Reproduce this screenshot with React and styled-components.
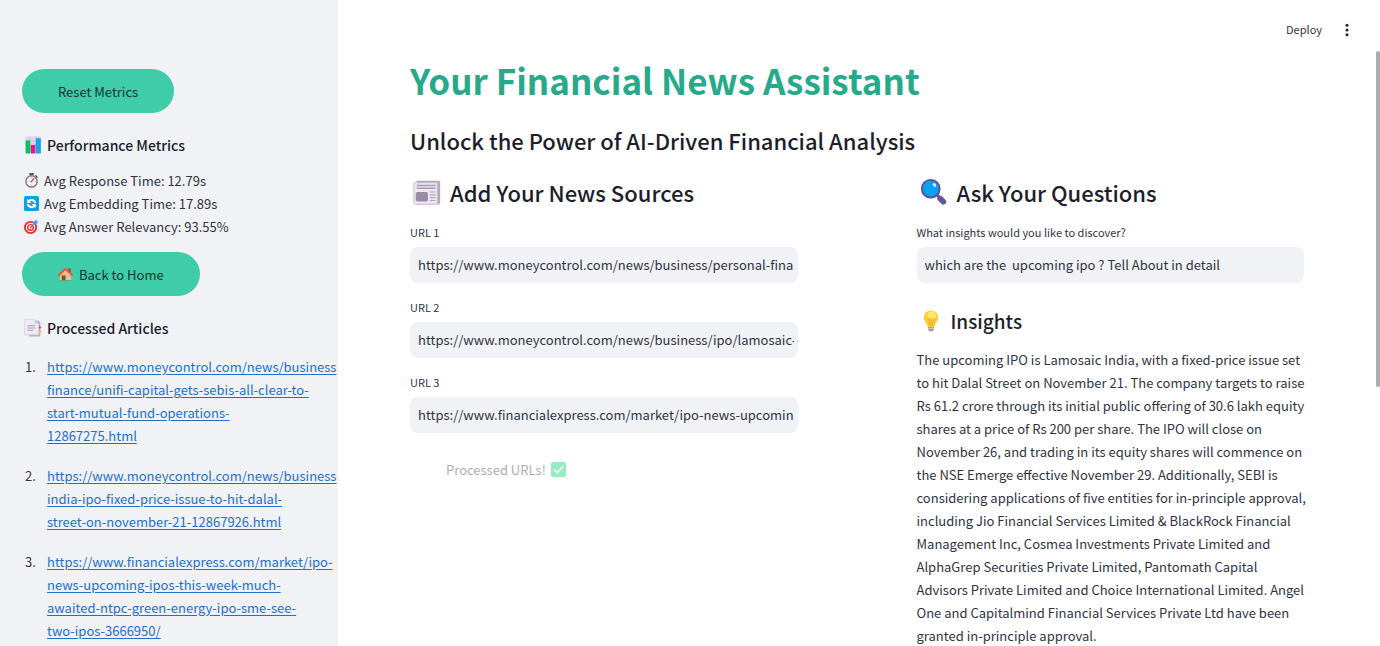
import React from "react";
import styled, { createGlobalStyle } from "styled-components";

const GlobalStyle = createGlobalStyle`
  *, *::before, *::after { box-sizing: border-box; }
  body {
    margin: 0;
    background: #ffffff;
    color: #31333f;
    font-family: "Noto Sans CJK SC", "Noto Sans", sans-serif;
    font-size: 13px;
    line-height: 23px;
  }
  button, input { font: inherit; color: inherit; }
`;

const Page = styled.div`
  position: relative;
  display: flex;
  height: 100vh;
  overflow: hidden;
`;

const Sidebar = styled.aside`
  flex: 0 0 338px;
  background: #f0f2f6;
  padding: 69px 0 0 22px;
`;

const PillButton = styled.button`
  display: flex;
  align-items: center;
  gap: 6px;
  height: 44px;
  padding: 0 36px;
  border: 0;
  border-radius: 22px;
  background: #3fcca9;
  color: #18332f;
  cursor: pointer;
`;

const SidebarHeading = styled.h2`
  display: flex;
  align-items: center;
  gap: 5px;
  margin: 20px 0 12px;
  padding-left: 2px;
  font-size: 14px;
  line-height: 24px;
  font-weight: 500;
  color: #1c1e2b;
`;

const MetricList = styled.ul`
  list-style: none;
  margin: 0 0 14px;
  padding: 0 0 0 2px;
`;

const Metric = styled.li`
  display: flex;
  align-items: center;
  gap: 5px;
`;

const ArticleList = styled.ol`
  list-style: none;
  counter-reset: article;
  display: flex;
  flex-direction: column;
  gap: 17px;
  margin: 15px 0 0;
  padding: 0;
`;

const Article = styled.li`
  counter-increment: article;
  display: grid;
  grid-template-columns: 22px 1fr;
  padding-left: 3px;

  &::before { content: counter(article) "."; }
`;

const ArticleLink = styled.a`
  white-space: pre;
  color: #1f6fcb;
  text-decoration: underline;
  text-underline-offset: 2px;
`;

const Main = styled.main`
  flex: 1;
  min-width: 0;
`;

const Toolbar = styled.header`
  display: flex;
  justify-content: flex-end;
  align-items: center;
  gap: 18px;
  height: 59px;
  padding-right: 26px;
`;

const ToolButton = styled.button`
  display: flex;
  align-items: center;
  padding: 0;
  border: 0;
  background: none;
  font-size: 11px;
  cursor: pointer;
`;

const Content = styled.div`
  padding: 0 76px 0 72px;
`;

const Title = styled.h1`
  margin: 0;
  font-size: 35px;
  line-height: 42px;
  font-weight: 700;
  color: #27a98b;
`;

const Subtitle = styled.h2`
  margin: 22px 0 0;
  font-size: 22px;
  line-height: 34px;
  font-weight: 500;
  color: #1c1e2b;
`;

const Columns = styled.div`
  display: grid;
  grid-template-columns: 1fr 1fr;
  gap: 119px;
  margin-top: 18px;
`;

const SectionHeading = styled.h3`
  display: flex;
  align-items: center;
  gap: 8px;
  margin: 0 0 14px;
  padding-left: 2px;
  font-size: 22px;
  line-height: 34px;
  font-weight: 500;
  color: #1c1e2b;
`;

const InsightsHeading = styled(SectionHeading)`
  margin: 21px 0 10px;
  font-size: 19px;
`;

const Field = styled.div`
  display: flex;
  flex-direction: column;
  gap: 5px;
  margin-bottom: 15px;
`;

const Label = styled.label`
  font-size: 11px;
  line-height: 19px;
`;

const TextInput = styled.input`
  width: 100%;
  height: 36px;
  padding: 0 4px 1px 8px;
  border: 0;
  border-radius: 8px;
  background: #f0f2f6;
  outline: none;
`;

const Status = styled.p`
  display: flex;
  align-items: center;
  gap: 5px;
  margin: 25px 0 0;
  padding-left: 36px;
  opacity: 0.4;
`;

const Answer = styled.p`
  margin: 0 -4px 0 0;
`;

const ScrollThumb = styled.div`
  position: absolute;
  top: 51px;
  right: 0;
  width: 4px;
  height: 52%;
  border-radius: 2px;
  background: #adadb1;
`;

const Icon = styled.svg.attrs({ viewBox: "0 0 32 32", "aria-hidden": true })`
  flex: none;
  width: ${(p) => p.$size}px;
  height: ${(p) => p.$size}px;
`;

const ChartIcon = () => (
  <Icon $size={18}>
    <rect x="2" y="1" width="28" height="29" rx="2" fill="#ded6e8" />
    <path d="M2 9H30M2 16H30M2 23H30M11 1V30M21 1V30" stroke="#c3b8d3" />
    <rect x="3" y="8" width="8" height="23" rx="1" fill="#00c65a" />
    <rect x="12" y="16" width="8" height="15" rx="1" fill="#e8148c" />
    <rect x="21" y="4" width="9" height="27" rx="1" fill="#12a5f4" />
  </Icon>
);

const StopwatchIcon = () => (
  <Icon $size={15}>
    <rect x="11" y="0" width="10" height="4" rx="1" fill="#5a5460" />
    <path d="M16 3V8M25 6L28 9" stroke="#5a5460" strokeWidth="3" strokeLinecap="round" />
    <circle cx="16" cy="18" r="12" fill="#f5f3f6" stroke="#7b7780" strokeWidth="3" />
    <path d="M16 9V11M16 25V27M7 18H9M23 18H25" stroke="#a09aa7" strokeWidth="1.5" />
    <path d="M15 19L21 12" stroke="#e5352c" strokeWidth="2.5" strokeLinecap="round" />
  </Icon>
);

const RefreshIcon = () => (
  <Icon $size={15}>
    <rect width="32" height="32" rx="4" fill="#0aa2ee" />
    <path d="M10 11C13 7 22 7 24 15M22 21C19 25 10 25 8 17" fill="none" stroke="#fff" strokeWidth="4" />
    <path d="M7 6V15H16ZM25 26V17H16Z" fill="#fff" />
  </Icon>
);

const TargetIcon = () => (
  <Icon $size={15}>
    <circle cx="14" cy="18" r="12" fill="#fff" stroke="#ea2c2c" strokeWidth="4" />
    <circle cx="14" cy="18" r="6" fill="#fff" stroke="#ea2c2c" strokeWidth="3" />
    <circle cx="14" cy="18" r="2" fill="#ea2c2c" />
    <path d="M14 18L24 8" stroke="#52617a" strokeWidth="2" />
    <path d="M19 8L26 1L27 5L31 6L24 13L19 13Z" fill="#33a6ee" />
  </Icon>
);

const HouseIcon = () => (
  <Icon $size={15}>
    <path d="M22 3H27V12L22 8Z" fill="#9c4b35" />
    <path d="M4 15L16 4L28 15V29H4Z" fill="#f6bd7c" />
    <rect x="8" y="18" width="8" height="11" fill="#82503f" />
    <rect x="19" y="17" width="6" height="7" fill="#9bd1f5" />
    <path d="M2 17L16 4L30 17" fill="none" stroke="#ef4e37" strokeWidth="4" strokeLinecap="round" strokeLinejoin="round" />
    <rect x="3" y="28" width="26" height="2" fill="#70a34a" />
  </Icon>
);

const TabsIcon = () => (
  <Icon $size={18}>
    <path d="M7 3H26L29 6V31H9Z" fill="#b8adc4" />
    <rect x="26" y="13" width="4" height="4" rx="1" fill="#f02f8c" />
    <rect x="27" y="20" width="4" height="4" rx="1" fill="#ffc43d" />
    <path d="M2 1H19L26 8V28H2Q1 28 1 27V2Q1 1 2 1Z" fill="#f1ebf6" stroke="#d0c6da" />
    <path d="M19 1V8H26Z" fill="#cdc2d8" />
    <path d="M6 12H20M6 16H20M6 20H16" stroke="#a79ab5" strokeWidth="1.8" />
  </Icon>
);

const NewspaperIcon = () => (
  <Icon $size={30}>
    <path d="M5 4H29Q30 4 30 5V27Q30 29 28 29H5Z" fill="#b4aabb" />
    <path d="M3 6H27V27Q27 29 29 29H4Q2 29 2 27V7Q2 6 3 6Z" fill="#eee8f2" stroke="#c5bbcc" />
    <path d="M5 9H25M5 12H25" stroke="#a99bb2" strokeWidth="1.5" />
    <rect x="4" y="16" width="13" height="10" rx="2" fill="#998aa5" />
    <path d="M19 16H25M19 19H25M19 22H25M19 25H25" stroke="#b0a4b9" strokeWidth="1.2" />
  </Icon>
);

const MagnifierIcon = () => (
  <Icon $size={30}>
    <path d="M19 19L22 22" stroke="#5a4a8b" strokeWidth="3" />
    <path d="M22.500 23L26 26.500" stroke="#66559a" strokeWidth="6" strokeLinecap="round" />
    <circle cx="12.500" cy="12.500" r="9.500" fill="#08a2f2" stroke="#5f4e91" strokeWidth="2" />
    <ellipse cx="16.500" cy="8.500" rx="1.600" ry="2.200" fill="#d9f1ff" transform="rotate(-35 16.500 8.500)" />
  </Icon>
);

const BulbIcon = () => (
  <Icon $size={24}>
    <path d="M16 2C9 2 6.500 7 6.500 12C6.500 17 11 18 11.500 24H20.500C21 18 25.500 17 25.500 12C25.500 7 23 2 16 2Z" fill="#ffc936" />
    <ellipse cx="17" cy="8.500" rx="6" ry="5.500" fill="#ffea63" />
    <path d="M13 13L15 23M19 13L17 23M13 13H19" stroke="#eea51e" fill="none" />
    <path d="M12 24H20V27L18 30H14L12 27Z" fill="#a6a3aa" />
    <path d="M12 26H20" stroke="#d5d2d8" />
  </Icon>
);

const CheckIcon = () => (
  <Icon $size={15}>
    <rect width="32" height="32" rx="4" fill="#00d26a" />
    <path d="M7 17L13 23L25 10" fill="none" stroke="#fff" strokeWidth="3.500" strokeLinecap="round" strokeLinejoin="round" />
  </Icon>
);

const MenuIcon = () => (
  <Icon $size={14}>
    <circle cx="16" cy="5" r="3.500" fill="#262936" />
    <circle cx="16" cy="16" r="3.500" fill="#262936" />
    <circle cx="16" cy="27" r="3.500" fill="#262936" />
  </Icon>
);

const articles = [
  {
    url: "https://www.moneycontrol.com/news/business/personal-finance/unifi-capital-gets-sebis-all-clear-to-start-mutual-fund-operations-12867275.html",
    lines: [
      "https://www.moneycontrol.com/news/business",
      "finance/unifi-capital-gets-sebis-all-clear-to-",
      "start-mutual-fund-operations-",
      "12867275.html",
    ],
  },
  {
    url: "https://www.moneycontrol.com/news/business/ipo/lamosaic-india-ipo-fixed-price-issue-to-hit-dalal-street-on-november-21-12867926.html",
    lines: [
      "https://www.moneycontrol.com/news/business",
      "india-ipo-fixed-price-issue-to-hit-dalal-",
      "street-on-november-21-12867926.html",
    ],
  },
  {
    url: "https://www.financialexpress.com/market/ipo-news-upcoming-ipos-this-week-much-awaited-ntpc-green-energy-ipo-sme-see-two-ipos-3666950/",
    lines: [
      "https://www.financialexpress.com/market/ipo-",
      "news-upcoming-ipos-this-week-much-",
      "awaited-ntpc-green-energy-ipo-sme-see-",
      "two-ipos-3666950/",
    ],
  },
];

export default function App() {
  return (
    <>
      <GlobalStyle />
      <Page>
        <Sidebar>
          <PillButton type="button">Reset Metrics</PillButton>
          <SidebarHeading><ChartIcon />Performance Metrics</SidebarHeading>
          <MetricList>
            <Metric><StopwatchIcon />Avg Response Time: 12.79s</Metric>
            <Metric><RefreshIcon />Avg Embedding Time: 17.89s</Metric>
            <Metric><TargetIcon />Avg Answer Relevancy: 93.55%</Metric>
          </MetricList>
          <PillButton type="button"><HouseIcon />Back to Home</PillButton>
          <SidebarHeading><TabsIcon />Processed Articles</SidebarHeading>
          <ArticleList>
            {articles.map(({ url, lines }) => (
              <Article key={url}>
                <div><ArticleLink href={url}>{lines.join("\n")}</ArticleLink></div>
              </Article>
            ))}
          </ArticleList>
        </Sidebar>
        <Main>
          <Toolbar>
            <ToolButton type="button">Deploy</ToolButton>
            <ToolButton type="button" aria-label="Main menu"><MenuIcon /></ToolButton>
          </Toolbar>
          <Content>
            <Title>Your Financial News Assistant</Title>
            <Subtitle>Unlock the Power of AI-Driven Financial Analysis</Subtitle>
            <Columns>
              <section>
                <SectionHeading><NewspaperIcon />Add Your News Sources</SectionHeading>
                {articles.map(({ url }, i) => (
                  <Field key={url}>
                    <Label htmlFor={`url-${i + 1}`}>URL {i + 1}</Label>
                    <TextInput id={`url-${i + 1}`} type="text" defaultValue={url} />
                  </Field>
                ))}
                <Status>Processed URLs! <CheckIcon /></Status>
              </section>
              <section>
                <SectionHeading><MagnifierIcon />Ask Your Questions</SectionHeading>
                <Field>
                  <Label htmlFor="question">What insights would you like to discover?</Label>
                  <TextInput id="question" type="text" defaultValue="which are the  upcoming ipo ? Tell About in detail" />
                </Field>
                <InsightsHeading><BulbIcon />Insights</InsightsHeading>
                <Answer>
                  The upcoming IPO is Lamosaic India, with a fixed-price issue set to hit Dalal Street on
                  November 21. The company targets to raise Rs 61.2 crore through its initial public offering
                  of 30.6 lakh equity shares at a price of Rs 200 per share. The IPO will close on November 26,
                  and trading in its equity shares will commence on the NSE Emerge effective November 29.
                  Additionally, SEBI is considering applications of five entities for in-principle approval,
                  including Jio Financial Services Limited &amp; BlackRock Financial Management Inc, Cosmea
                  Investments Private Limited and AlphaGrep Securities Private Limited, Pantomath Capital
                  Advisors Private Limited and Choice International Limited. Angel One and Capitalmind
                  Financial Services Private Ltd have been granted in-principle approval.
                </Answer>
              </section>
            </Columns>
          </Content>
        </Main>
        <ScrollThumb />
      </Page>
    </>
  );
}
